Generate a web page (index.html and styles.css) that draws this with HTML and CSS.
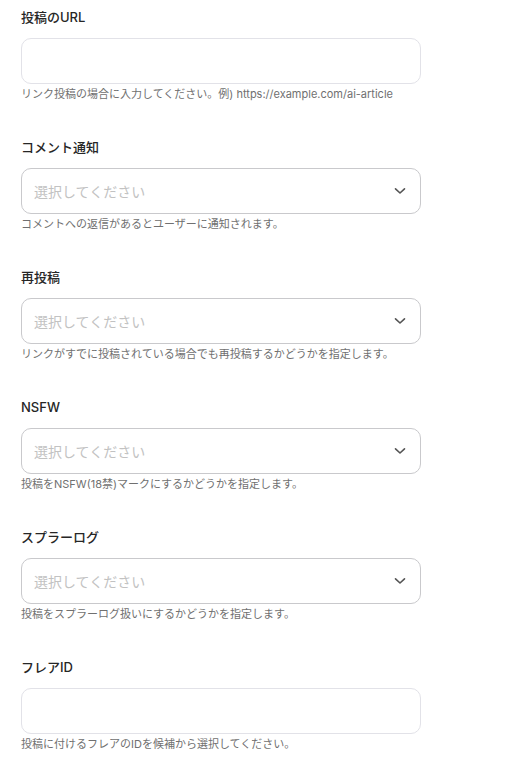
FILE: index.html
```html
<!DOCTYPE html>
<html>
<head>
<meta charset="UTF-8">
<meta name="viewport" content="width=device-width, initial-scale=1.0">
<title>投稿設定</title>
<link rel="stylesheet" href="styles.css">
</head>
<body>
<form class="form">
  <div class="field">
    <label class="label" for="url">投稿のURL</label>
    <input class="input" id="url" type="text">
    <p class="help">リンク投稿の場合に入力してください。例) https://example.com/ai-article</p>
  </div>

  <div class="field">
    <label class="label">コメント通知</label>
    <div class="select">
      <span class="placeholder">選択してください</span>
      <svg class="chevron" width="12" height="8" viewBox="0 0 12 8"><path d="M1.5 1.8 L6 6 L10.5 1.8" fill="none" stroke="#555" stroke-width="1.6" stroke-linecap="round" stroke-linejoin="round"/></svg>
    </div>
    <p class="help">コメントへの返信があるとユーザーに通知されます。</p>
  </div>

  <div class="field">
    <label class="label">再投稿</label>
    <div class="select">
      <span class="placeholder">選択してください</span>
      <svg class="chevron" width="12" height="8" viewBox="0 0 12 8"><path d="M1.5 1.8 L6 6 L10.5 1.8" fill="none" stroke="#555" stroke-width="1.6" stroke-linecap="round" stroke-linejoin="round"/></svg>
    </div>
    <p class="help">リンクがすでに投稿されている場合でも再投稿するかどうかを指定します。</p>
  </div>

  <div class="field">
    <label class="label">NSFW</label>
    <div class="select">
      <span class="placeholder">選択してください</span>
      <svg class="chevron" width="12" height="8" viewBox="0 0 12 8"><path d="M1.5 1.8 L6 6 L10.5 1.8" fill="none" stroke="#555" stroke-width="1.6" stroke-linecap="round" stroke-linejoin="round"/></svg>
    </div>
    <p class="help">投稿をNSFW(18禁)マークにするかどうかを指定します。</p>
  </div>

  <div class="field">
    <label class="label">スプラーログ</label>
    <div class="select">
      <span class="placeholder">選択してください</span>
      <svg class="chevron" width="12" height="8" viewBox="0 0 12 8"><path d="M1.5 1.8 L6 6 L10.5 1.8" fill="none" stroke="#555" stroke-width="1.6" stroke-linecap="round" stroke-linejoin="round"/></svg>
    </div>
    <p class="help">投稿をスプラーログ扱いにするかどうかを指定します。</p>
  </div>

  <div class="field">
    <label class="label" for="flair">フレアID</label>
    <input class="input" id="flair" type="text">
    <p class="help">投稿に付けるフレアのIDを候補から選択してください。</p>
  </div>
</form>
</body>
</html>
```

FILE: styles.css
```css
body {
  margin: 0;
  padding: 0;
  background: #fff;
  font-family: Inter, "Noto Sans CJK JP", sans-serif;
  color: #222;
}

.form {
  width: 400px;
  padding: 7px 0 0 21px;
  display: flex;
  flex-direction: column;
  gap: 36px;
}

.field {
  display: flex;
  flex-direction: column;
}

.label {
  font-size: 13px;
  font-weight: 500;
  line-height: 20px;
  margin-bottom: 11px;
  color: #262626;
}

.input {
  box-sizing: border-box;
  width: 100%;
  height: 46px;
  margin: 0;
  padding: 0 12px;
  border: 1px solid #e2e2e8;
  border-radius: 10px;
  background: #fff;
  font-family: inherit;
  font-size: 14px;
  outline: none;
}

.select {
  box-sizing: border-box;
  height: 46px;
  padding: 0 14px 0 12px;
  border: 1px solid #c9c9cc;
  border-radius: 10px;
  display: flex;
  align-items: center;
  justify-content: space-between;
}

.placeholder {
  font-size: 14px;
  color: #c2c2c2;
}

.chevron {
  display: block;
}

.help {
  margin: 3px 0 0;
  font-size: 11px;
  line-height: 14px;
  color: #707070;
}
```
